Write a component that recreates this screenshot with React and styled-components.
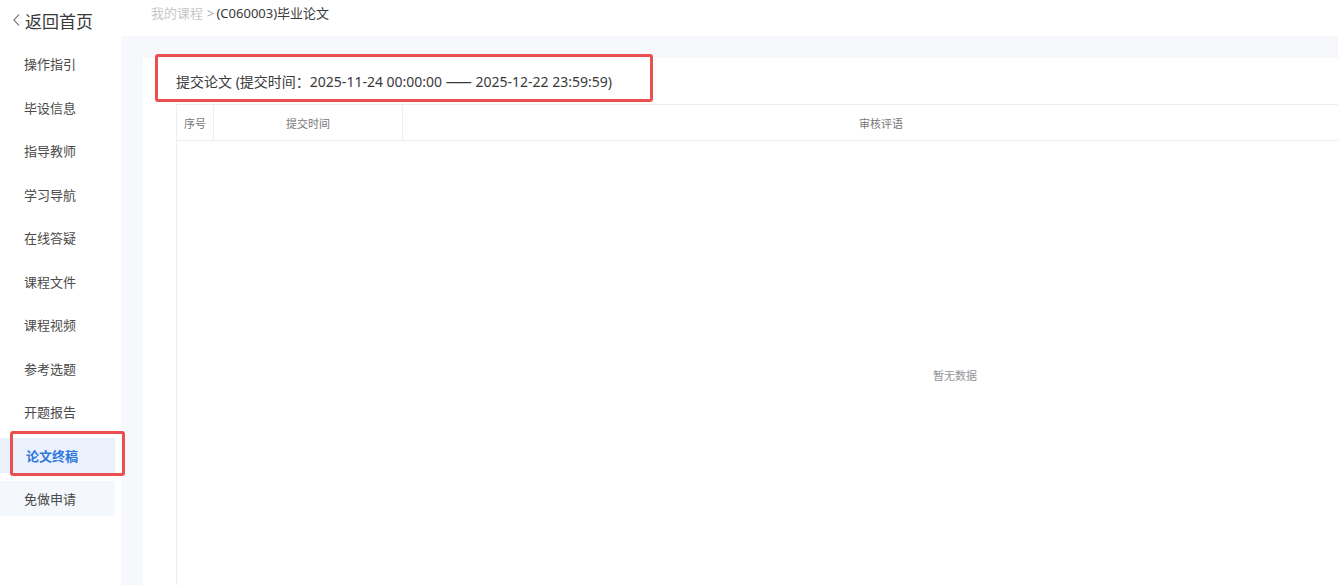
import React from "react";
import styled, { createGlobalStyle } from "styled-components";

const menu = [
  "操作指引",
  "毕设信息",
  "指导教师",
  "学习导航",
  "在线答疑",
  "课程文件",
  "课程视频",
  "参考选题",
  "开题报告",
  "论文终稿",
  "免做申请",
];

function App() {
  return (
    <>
      <GlobalStyle />
      <Page>
        <Sidebar>
          <BackLink>
            <svg width="9" height="14" viewBox="0 0 9 14">
              <path d="M7 1.5 L2 7 L7 12.5" fill="none" stroke="#666" strokeWidth="1.1" />
            </svg>
            返回首页
          </BackLink>
          <Menu>
            {menu.map((m) => (
              <MenuItem key={m} active={m === "论文终稿"} hover={m === "免做申请"}>
                {m}
                {m === "论文终稿" && <MarkBox />}
              </MenuItem>
            ))}
          </Menu>
        </Sidebar>
        <Main>
          <Crumbs>
            <CrumbLink>我的课程</CrumbLink>
            <CrumbSep>&gt;</CrumbSep>
            <CrumbCurrent>(C060003)毕业论文</CrumbCurrent>
          </Crumbs>
          <Body>
            <Card>
              <CardTitle>
                提交论文 (提交时间：2025-11-24 00:00:00 <Dash>——</Dash> 2025-12-22 23:59:59)
                <TitleMark />
              </CardTitle>
              <Table>
                <HeadRow>
                  <HeadCell width={37}>序号</HeadCell>
                  <HeadCell width={188}>提交时间</HeadCell>
                  <HeadCell width={956}>审核评语</HeadCell>
                  <HeadCell width={375}></HeadCell>
                </HeadRow>
                <Empty>暂无数据</Empty>
              </Table>
            </Card>
          </Body>
        </Main>
      </Page>
    </>
  );
}

export default App;

const GlobalStyle = createGlobalStyle`
  html, body {
    margin: 0;
    padding: 0;
    overflow: hidden;
    background: #fff;
    font-family: "Noto Sans", "Noto Sans CJK SC", sans-serif;
  }
`;

const Page = styled.div`
  display: flex;
  width: 100vw;
  height: 100vh;
  overflow: hidden;
`;

const Sidebar = styled.div`
  width: 121px;
  flex-shrink: 0;
  background: #fff;
  position: relative;
  z-index: 1;
`;

const BackLink = styled.div`
  height: 40px;
  display: flex;
  align-items: center;
  gap: 4px;
  padding-left: 12px;
  font-size: 17px;
  color: #3a3a3a;
  cursor: pointer;
`;

const Menu = styled.div`
  padding-top: 6px;
  width: 115px;
`;

const MenuItem = styled.div`
  position: relative;
  height: 35px;
  margin-bottom: 8.5px;
  display: flex;
  align-items: center;
  padding-left: ${(p) => (p.active ? "26px" : "24px")};
  font-size: 13px;
  color: ${(p) => (p.active ? "#2f78dc" : "#4a4a4a")};
  font-weight: ${(p) => (p.active ? "bold" : "normal")};
  background: ${(p) => (p.active ? "#ebf1fc" : p.hover ? "#f4f7fc" : "transparent")};
  cursor: pointer;
`;

const MarkBox = styled.div`
  position: absolute;
  left: 10px;
  right: -10px;
  top: -7px;
  bottom: -3px;
  border: 3px solid #eb5050;
  border-radius: 3px;
  pointer-events: none;
`;

const Main = styled.div`
  flex: 1;
  display: flex;
  flex-direction: column;
  min-width: 0;
`;

const Crumbs = styled.div`
  height: 36px;
  flex-shrink: 0;
  background: #fff;
  padding: 4px 0 0 30px;
  box-sizing: border-box;
  font-size: 13px;
  line-height: 18px;
`;

const CrumbLink = styled.span`
  color: #c8c8c8;
`;

const CrumbSep = styled.span`
  color: #aaa;
  margin: 0 2px 0 4px;
`;

const CrumbCurrent = styled.span`
  color: #3a3a3a;
`;

const Body = styled.div`
  flex: 1;
  background: #f6f8fc;
  padding: 22px 0 0 22px;
  display: flex;
  min-height: 0;
`;

const Card = styled.div`
  flex: 1;
  background: #fff;
  padding-left: 33px;
  min-width: 0;
`;

const CardTitle = styled.div`
  position: relative;
  height: 46px;
  display: flex;
  align-items: center;
  white-space: pre;
  font-size: 14px;
  color: #3a3a3a;
`;

const Dash = styled.span`
  letter-spacing: -2px;
  margin-right: 2px;
`;

const TitleMark = styled.div`
  position: absolute;
  left: -21px;
  top: -4px;
  width: 498px;
  height: 48px;
  box-sizing: border-box;
  border: 3px solid #eb5050;
  border-radius: 3px;
  pointer-events: none;
`;

const Table = styled.div`
  width: 1556px;
  border-top: 1px solid #ebeef5;
  border-left: 1px solid #ebeef5;
`;

const HeadRow = styled.div`
  display: flex;
  height: 35px;
  border-bottom: 1px solid #ebeef5;
`;

const HeadCell = styled.div`
  width: ${(p) => p.width}px;
  flex-shrink: 0;
  display: flex;
  align-items: center;
  justify-content: center;
  font-size: 11px;
  color: #777;
  border-right: 1px solid #ebeef5;
  &:first-child {
    width: 36px;
  }
`;

const Empty = styled.div`
  height: 468px;
  display: flex;
  align-items: center;
  justify-content: center;
  font-size: 11px;
  color: #909399;
`;
